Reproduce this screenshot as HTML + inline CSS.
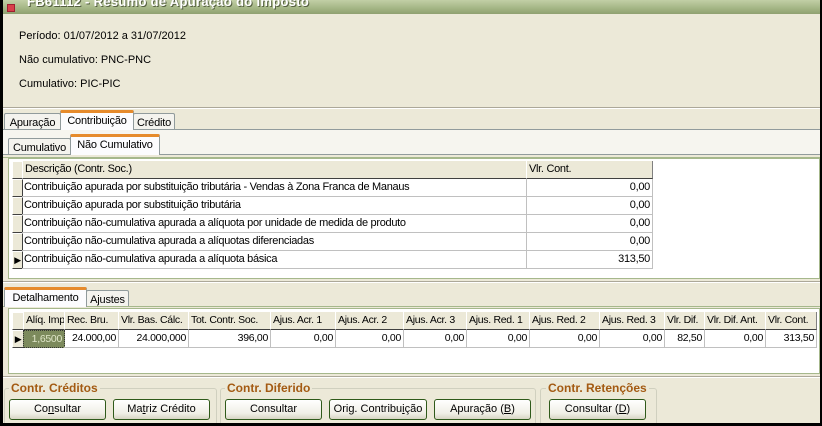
<!DOCTYPE html>
<html><head><meta charset="utf-8"><style>
*{box-sizing:border-box;margin:0;padding:0}
body{width:822px;height:426px;background:#000;position:relative;overflow:hidden;font-family:"Liberation Sans",Arial,sans-serif;font-size:11px;color:#000}
.a{position:absolute}
#win{left:3px;top:0;width:817px;height:423px;background:#ECE9D8;overflow:hidden}
.title{left:0;top:0;width:817px;height:14px;background:linear-gradient(#c2cfa6,#a3b584 60%,#8fa070);}
.tt{left:24px;top:-6px;color:#fff;font-weight:bold;font-size:13px;white-space:nowrap;text-shadow:1px 1px 0 #556040;letter-spacing:.3px}
.tab{position:absolute;border:1px solid #919b9c;border-bottom:none;background:#f4f3ee;text-align:center;padding-top:3px;border-radius:2px 2px 0 0;letter-spacing:-.2px}
.tab.on{background:#fcfcfe;border-top:3px solid #e68b2c;padding-top:2px;z-index:2}
.hline{position:absolute;height:1px;background:#919b9c}
.grid{position:absolute;background:#fff;border:1px solid #a6b88c}
.c{position:absolute;height:18px;line-height:17px;white-space:nowrap;overflow:hidden;padding:0 2px;border-right:1px solid #c0c0c0;border-bottom:1px solid #c0c0c0;letter-spacing:-.3px}
.h{background:#ECE9D8;border-right:1px solid #808080;border-bottom:1px solid #404040;border-left:1px solid #fff;padding-left:2px}
.r{text-align:right}
.ind{background:#ECE9D8;border:1px solid;border-color:#fff #404040 #404040 #fff;padding:0}
.btn{position:absolute;height:21px;border:1px solid #2f5a1a;border-radius:3px;background:linear-gradient(#fff,#f0efe6 70%,#d8d5c4);text-align:center;line-height:19px}
.gb{position:absolute;border:1px solid #d0d0bf;border-radius:3px}
.gl{position:absolute;color:#a35a12;font-weight:bold;font-size:12px;background:#ECE9D8;padding:0 2px}
</style></head><body>
<div id="win" class="a">
<div class="a title"></div>
<div class="a" style="left:4px;top:4px;width:8px;height:8px;background:#d8404a;border:1px solid #a02030"></div>
<div class="a tt">FB61112 - Resumo de Apuração do Imposto</div>
<div class="a" style="left:16px;top:30px">Período: 01/07/2012 a 31/07/2012</div>
<div class="a" style="left:16px;top:54px">Não cumulativo: PNC-PNC</div>
<div class="a" style="left:16px;top:78px">Cumulativo: PIC-PIC</div>
<div class="hline" style="left:0;top:107px;width:817px;background:#aca899"></div>
<div class="hline" style="left:0;top:108px;width:817px;background:#fff"></div>

<div class="tab" style="left:1px;top:113px;width:57px;height:17px">Apuração</div>
<div class="tab on" style="left:57px;top:110px;width:74px;height:20px">Contribuição</div>
<div class="tab" style="left:130px;top:113px;width:42px;height:17px">Crédito</div>
<div class="hline" style="left:0;top:129px;width:817px;background:#919b9c"></div>
<div class="a" style="left:0;top:130px;width:817px;height:25px;background:#f6f5ef"></div>
<div class="tab" style="left:5px;top:138px;width:63px;height:17px">Cumulativo</div>
<div class="tab on" style="left:67px;top:134px;width:90px;height:21px">Não Cumulativo</div>
<div class="hline" style="left:0;top:154px;width:817px;background:#919b9c"></div>
<div class="hline" style="left:0;top:157px;width:817px;background:#a6b88c"></div>

<div class="grid" style="left:5px;top:158px;width:812px;height:121px">
<div class="c ind" style="left:3px;top:2px;width:11px"></div>
<div class="c h" style="left:13px;top:2px;width:505px">Descrição (Contr. Soc.)</div>
<div class="c h" style="left:517px;top:2px;width:127px">Vlr. Cont.</div>
<div class="c ind" style="left:3px;top:20px;width:11px"></div><div class="c" style="left:13px;top:20px;width:505px">Contribuição apurada por substituição tributária - Vendas à Zona Franca de Manaus</div><div class="c r" style="left:517px;top:20px;width:127px">0,00</div>
<div class="c ind" style="left:3px;top:38px;width:11px"></div><div class="c" style="left:13px;top:38px;width:505px">Contribuição apurada por substituição tributária</div><div class="c r" style="left:517px;top:38px;width:127px">0,00</div>
<div class="c ind" style="left:3px;top:56px;width:11px"></div><div class="c" style="left:13px;top:56px;width:505px">Contribuição não-cumulativa apurada a alíquota por unidade de medida de produto</div><div class="c r" style="left:517px;top:56px;width:127px">0,00</div>
<div class="c ind" style="left:3px;top:74px;width:11px"></div><div class="c" style="left:13px;top:74px;width:505px">Contribuição não-cumulativa apurada a alíquotas diferenciadas</div><div class="c r" style="left:517px;top:74px;width:127px">0,00</div>
<div class="c ind" style="left:3px;top:92px;width:11px;font-size:9px;line-height:16px;text-align:center">&#9654;</div><div class="c" style="left:13px;top:92px;width:505px">Contribuição não-cumulativa apurada a alíquota básica</div><div class="c r" style="left:517px;top:92px;width:127px">313,50</div>
</div>
<div class="hline" style="left:0;top:281px;width:817px;background:#aca899"></div>
<div class="hline" style="left:0;top:282px;width:817px;background:#fff"></div>

<div class="tab on" style="left:1px;top:287px;width:83px;height:20px">Detalhamento</div>
<div class="tab" style="left:83px;top:290px;width:43px;height:17px">Ajustes</div>
<div class="hline" style="left:0;top:306px;width:817px;background:#a6b88c"></div>

<div class="grid" style="left:5px;top:308px;width:812px;height:66px;font-size:10.5px">
<div class="c ind" style="left:3px;top:3px;width:12px"></div>
<div class="c h" style="left:14px;top:3px;width:42px">Alíq. Imp</div>
<div class="c h" style="left:55px;top:3px;width:55px">Rec. Bru.</div>
<div class="c h" style="left:109px;top:3px;width:71px">Vlr. Bas. Cálc.</div>
<div class="c h" style="left:179px;top:3px;width:83px">Tot. Contr. Soc.</div>
<div class="c h" style="left:261px;top:3px;width:66px">Ajus. Acr. 1</div>
<div class="c h" style="left:326px;top:3px;width:69px">Ajus. Acr. 2</div>
<div class="c h" style="left:394px;top:3px;width:64px">Ajus. Acr. 3</div>
<div class="c h" style="left:457px;top:3px;width:64px">Ajus. Red. 1</div>
<div class="c h" style="left:520px;top:3px;width:71px">Ajus. Red. 2</div>
<div class="c h" style="left:590px;top:3px;width:66px">Ajus. Red. 3</div>
<div class="c h" style="left:655px;top:3px;width:41px">Vlr. Dif.</div>
<div class="c h" style="left:695px;top:3px;width:62px">Vlr. Dif. Ant.</div>
<div class="c h" style="left:756px;top:3px;width:52px">Vlr. Cont.</div>
<div class="c ind" style="left:3px;top:21px;width:12px;font-size:9px;line-height:16px;text-align:center">&#9654;</div>
<div class="c r" style="left:14px;top:21px;width:42px;background:#7c8a5c;color:#dfe6c8;border:1px dotted #333">1,6500</div>
<div class="c r" style="left:55px;top:21px;width:55px">24.000,00</div>
<div class="c r" style="left:109px;top:21px;width:71px">24.000,000</div>
<div class="c r" style="left:179px;top:21px;width:83px">396,00</div>
<div class="c r" style="left:261px;top:21px;width:66px">0,00</div>
<div class="c r" style="left:326px;top:21px;width:69px">0,00</div>
<div class="c r" style="left:394px;top:21px;width:64px">0,00</div>
<div class="c r" style="left:457px;top:21px;width:64px">0,00</div>
<div class="c r" style="left:520px;top:21px;width:71px">0,00</div>
<div class="c r" style="left:590px;top:21px;width:66px">0,00</div>
<div class="c r" style="left:655px;top:21px;width:41px">82,50</div>
<div class="c r" style="left:695px;top:21px;width:62px">0,00</div>
<div class="c r" style="left:756px;top:21px;width:52px">313,50</div>
</div>
<div class="hline" style="left:0;top:376px;width:817px;background:#aca899"></div>
<div class="hline" style="left:0;top:377px;width:817px;background:#fff"></div>

<div class="gb" style="left:1px;top:388px;width:213px;height:40px"></div>
<div class="gl" style="left:6px;top:381px">Contr. Créditos</div>
<div class="btn" style="left:6px;top:399px;width:97px">Co<u>n</u>sultar</div>
<div class="btn" style="left:110px;top:399px;width:97px">Ma<u>t</u>riz Crédito</div>
<div class="gb" style="left:217px;top:388px;width:316px;height:40px"></div>
<div class="gl" style="left:222px;top:381px">Contr. Diferido</div>
<div class="btn" style="left:222px;top:399px;width:97px">Consultar</div>
<div class="btn" style="left:326px;top:399px;width:98px">Orig. Contribu<u>i</u>ção</div>
<div class="btn" style="left:431px;top:399px;width:97px">Apuração (<u>B</u>)</div>
<div class="gb" style="left:537px;top:388px;width:117px;height:40px"></div>
<div class="gl" style="left:543px;top:381px">Contr. Retenções</div>
<div class="btn" style="left:546px;top:399px;width:97px">Consultar (<u>D</u>)</div>
</div>
</body></html>
